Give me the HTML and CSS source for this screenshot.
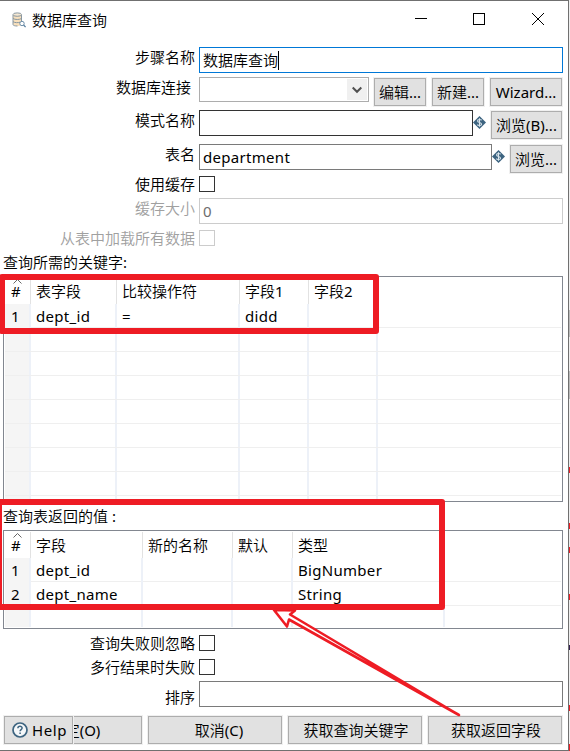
FILE: index.html
```html
<!DOCTYPE html>
<html lang="zh-CN">
<head>
  <meta charset="UTF-8" />
  <meta name="viewport" content="width=device-width, initial-scale=1.0" />
  <title>数据库查询</title>
  <link rel="stylesheet" href="styles.css">
</head>
<body>
  <div class="window">
    <div class="titlebar">
      <svg class="app-icon" width="15" height="17" viewBox="0 0 15 17">
        <path d="M1 3v9c0 1 2 2 4.500 2s4-.6 4-2V3z" fill="#f8e0bd" />
        <path d="M1 3v9.500c0 1 2 1.500 4.500 1.500M9.500 3v6M1 6.500c2 1.300 6.500 1.300 8.500 0M1 9.700c2 1.200 5 1.200 7 .5" fill="none" stroke="#8997a0" />
        <ellipse cx="5.250" cy="2.600" rx="4.250" ry="1.700" fill="#f4e7d2" stroke="#8997a0" />
        <circle cx="10" cy="11.500" r="2.200" fill="#fff" stroke="#6f90aa" />
        <path d="M11.600 13l2 2.200" stroke="#5a80a0" stroke-width="1.200" />
      </svg>
      <span class="title">数据库查询</span>
      <svg class="controls" width="130" height="14" viewBox="0 0 130 14" fill="none" stroke="#000">
        <path d="M0 6.500h12" />
        <rect x="58.500" y="1.500" width="11" height="11" />
        <path d="M117 1l12 12M129 1l-12 12" />
      </svg>
    </div>

    <div class="row row-step">
      <label>步骤名称</label>
      <div class="field focused">数据库查询<i class="caret"></i></div>
    </div>
    <div class="row row-conn">
      <label>数据库连接</label>
      <div class="combo">
        <span class="combo-arrow">
          <svg width="10" height="8" viewBox="0 0 10 8" fill="none" stroke="#505050" stroke-width="2"><path d="M.7 1.500L5 5.800 9.300 1.500" /></svg>
        </span>
      </div>
      <button class="btn w52 first">编辑...</button>
      <button class="btn w52">新建...</button>
      <button class="btn w72">Wizard...</button>
    </div>
    <div class="row row-schema">
      <label>模式名称</label>
      <div class="field dark"></div>
      <span class="var">
        <svg width="13" height="13" viewBox="0 0 12 12"><path d="M6 0l6 6-6 6-6-6z" fill="#3d6480" /><path d="M8 3.900C7.300 3 4.200 2.900 4.200 4.600S7.900 5.900 7.900 7.500 4.700 9 3.900 8M6 2v8" fill="none" stroke="#dce6ed" /></svg>
      </span>
      <button class="btn w71">浏览(B)...</button>
    </div>
    <div class="row row-table">
      <label>表名</label>
      <div class="field latin">department</div>
      <span class="var">
        <svg width="13" height="13" viewBox="0 0 12 12"><path d="M6 0l6 6-6 6-6-6z" fill="#3d6480" /><path d="M8 3.900C7.300 3 4.200 2.900 4.200 4.600S7.900 5.900 7.900 7.500 4.700 9 3.900 8M6 2v8" fill="none" stroke="#dce6ed" /></svg>
      </span>
      <button class="btn w52">浏览...</button>
    </div>
    <div class="row row-cache">
      <label>使用缓存</label>
      <span class="check"></span>
    </div>
    <div class="row row-size disabled">
      <label>缓存大小</label>
      <div class="field">0</div>
    </div>
    <div class="row row-all disabled">
      <label>从表中加载所有数据</label>
      <span class="check"></span>
    </div>

    <div class="section-title keys-title">查询所需的关键字:</div>
    <div class="grid keys">
      <div class="grid-row head"><span class="num">#</span><span>表字段</span><span>比较操作符</span><span>字段1</span><span>字段2</span><span></span></div>
      <div class="grid-row latin"><span class="num">1</span><span>dept_id</span><span>=</span><span>didd</span><span></span><span></span></div>
      <div class="grid-row"><span class="num"></span><span></span><span></span><span></span><span></span><span></span></div>
      <div class="grid-row"><span class="num"></span><span></span><span></span><span></span><span></span><span></span></div>
      <div class="grid-row"><span class="num"></span><span></span><span></span><span></span><span></span><span></span></div>
      <div class="grid-row"><span class="num"></span><span></span><span></span><span></span><span></span><span></span></div>
      <div class="grid-row"><span class="num"></span><span></span><span></span><span></span><span></span><span></span></div>
      <div class="grid-row"><span class="num"></span><span></span><span></span><span></span><span></span><span></span></div>
      <div class="grid-row"><span class="num"></span><span></span><span></span><span></span><span></span><span></span></div>
      <div class="grid-row last"><span class="num"></span><span></span><span></span><span></span><span></span><span></span></div>
    </div>

    <div class="section-title values-title">查询表返回的值 :</div>
    <div class="grid values">
      <div class="grid-row head"><span class="num">#</span><span>字段</span><span>新的名称</span><span>默认</span><span>类型</span><span></span></div>
      <div class="grid-row latin"><span class="num">1</span><span>dept_id</span><span></span><span></span><span>BigNumber</span><span></span></div>
      <div class="grid-row latin"><span class="num">2</span><span>dept_name</span><span></span><span></span><span>String</span><span></span></div>
      <div class="grid-row last"><span class="num"></span><span></span><span></span><span></span><span></span><span></span></div>
    </div>

    <div class="row row-fail">
      <label>查询失败则忽略</label>
      <span class="check"></span>
    </div>
    <div class="row row-multi">
      <label>多行结果时失败</label>
      <span class="check"></span>
    </div>
    <div class="row row-order">
      <label>排序</label>
      <div class="field"></div>
    </div>

    <div class="actions">
      <button class="btn ok">确定(O)</button>
      <button class="btn cancel">取消(C)</button>
      <button class="btn">获取查询关键字</button>
      <button class="btn">获取返回字段</button>
      <button class="btn help">
        <svg width="16" height="16" viewBox="0 0 16 16" fill="none" stroke="#3d6480"><circle cx="8" cy="8" r="7" stroke-width="1.700" fill="#f4f7f9" /><path d="M5.900 6.300c0-2.700 4.200-2.600 4.200-.2 0 1.500-2 1.500-2 3.200M8.100 10.500v1.600" stroke-width="1.500" /></svg>
        Help
      </button>
    </div>

    <!-- Red annotations -->
    <div class="mark mark-keys"></div>
    <div class="mark mark-values"></div>
    <svg class="arrow" width="200" height="120" viewBox="0 0 200 120">
      <path d="M9 5L22 21.500 24 14.500 194 110 25 9.500 30 5.500z" fill="#fff" stroke="#ee1c24" stroke-width="2.600" stroke-linejoin="round" />
    </svg>
  </div>
  <div class="backdrop"></div>
</body>
</html>
```

FILE: styles.css
```css
/* Global Styles */
* {
  box-sizing: border-box;
}
body {
  margin: 0;
  display: flex;
  width: 570px;
  height: 751px;
  overflow: hidden;
  background: #fff;
  color: #000;
  font-family: 'Noto Sans', 'Noto Sans CJK SC DemiLight', 'Noto Sans CJK SC', sans-serif;
  font-size: 15px;
  line-height: 20px;
}
/* Window */
.window {
  position: relative;
  width: 569px;
  height: 751px;
  overflow: hidden;
  border: solid #707070;
  border-width: 1px 1px 1px 0;
}
.backdrop {
  width: 1px;
  background: linear-gradient(#eee 310px, #bbb 310px, #bbb 337px, #eee 337px, #eee 371px, #bbb 371px, #bbb 399px, #eee 399px, #eee 467px, #ee1c24 467px, #ee1c24 473px, #eee 473px, #eee 523px, #ee1c24 523px, #ee1c24 529px, #eee 529px, #eee 547px, #ee1c24 547px, #ee1c24 553px, #eee 553px, #eee 594px, #ee1c24 594px, #ee1c24 600px, #eee 600px, #eee 645px, #312050 645px, #312050 650px, #eee 650px, #eee 705px, #ee1c24 705px, #ee1c24 711px, #eee 711px, #eee 744px, #ee1c24 744px);
}
/* Title Bar */
.titlebar {
  display: flex;
  align-items: center;
  height: 46px;
  padding: 0 23px 8px 12px;
}
.app-icon {
  margin-right: 5px;
}
.title {
  flex: 1;
}
.controls {
  position: relative;
  top: -1px;
}
/* Form Rows */
.row {
  display: flex;
  align-items: flex-start;
  padding-right: 5px;
}
.row label {
  width: 195px;
  margin-right: 4px;
  text-align: right;
  white-space: nowrap;
}
.field {
  flex: 1;
  height: 26px;
  padding: 2px 3px;
  border: 1px solid #7a7a7a;
  white-space: nowrap;
}
.field.focused {
  border-color: #0078d7;
}
.field.dark {
  border-color: #333;
}
.latin {
  letter-spacing: 0.3px;
}
.caret {
  display: inline-block;
  width: 1px;
  height: 19px;
  background: #000;
  vertical-align: -4px;
}
.check {
  width: 16px;
  height: 16px;
  border: 1px solid #333;
}
.row-step {
  height: 30px;
}
.row-conn {
  height: 33px;
}
.row-schema {
  height: 34px;
}
.row-table {
  height: 32px;
}
.row-cache {
  height: 22px;
}
.row-size {
  height: 32px;
}
.row-all {
  height: 22px;
}
.row-conn label {
  padding-right: 4px;
}
.row-cache label,
.row-all label,
.row-fail label,
.row-multi label {
  margin-top: -2px;
}
.row-order label {
  margin-top: 6px;
}
.disabled label {
  color: #a0a0a0;
}
.disabled .field {
  border-color: #ccc;
  color: #6d6d6d;
}
.disabled .check {
  border-color: #ccc;
}
.combo {
  display: flex;
  justify-content: flex-end;
  width: 170px;
  height: 25px;
  padding: 1px;
  border: 1px solid #adadad;
}
.combo-arrow {
  display: flex;
  align-items: center;
  justify-content: center;
  width: 20px;
  background: #f0f0f0;
}
.var {
  display: flex;
  width: 18px;
  padding-top: 6px;
}
/* Buttons */
.btn {
  height: 28px;
  padding: 0;
  border: 1px solid #adadad;
  background: #e1e1e1;
  box-shadow: 0 0 0 1px #f0f0f0;
  color: #000;
  font: inherit;
  white-space: nowrap;
}
.row .btn {
  margin: 1px 0 0 6px;
}
.row .btn.first {
  margin-left: 5px;
}
.row .var + .btn {
  margin-left: 0;
}
.row-conn,
.row-schema,
.row-table {
  padding-right: 6px;
}
.w52 {
  width: 52px;
}
.w71 {
  width: 71px;
}
.w72 {
  width: 72px;
}
/* Tables */
.section-title {
  height: 24px;
  padding-left: 3px;
}
.grid {
  width: 560px;
  margin-left: 3px;
  padding: 1px;
  border: 1px solid #828790;
}
.keys {
  height: 226px;
}
.values {
  height: 99px;
}
.grid-row {
  display: grid;
  height: 24px;
  border-bottom: 1px solid #efefef;
  line-height: 24px;
}
.keys .grid-row {
  grid-template-columns: 26px 86px 123px 69px 69px 1fr;
}
.values .grid-row {
  grid-template-columns: 26px 112px 90px 60px 152px 1fr;
}
.grid-row span {
  padding-left: 5px;
  border-right: 2px solid #edf1f8;
  white-space: nowrap;
}
.grid-row span:last-child {
  border-right: none;
}
.grid-row .num {
  padding-left: 6px;
  background: #f5f5f5;
}
.grid-row.head {
  height: 26px;
  border-bottom: none;
  line-height: 26px;
}
.grid-row.head span {
  border-right: 1px solid #e2e2e2;
}
.grid-row.head span:last-child {
  border-right: none;
}
.grid-row.head .num {
  background: #fff url("data:image/svg+xml,%3Csvg xmlns='http://www.w3.org/2000/svg' width='9' height='5'%3E%3Cpath d='M.5 4.500l4-4 4 4' fill='none' stroke='%23666'/%3E%3C/svg%3E") no-repeat 8px 1px;
}
.grid-row.last {
  border-bottom: none;
}
.keys .last {
  height: 4px;
}
.values .last {
  height: 21px;
}
.values-title {
  margin-top: 4px;
}
.row-fail {
  height: 24px;
  margin-top: 6px;
}
.row-multi {
  height: 22px;
}
/* Bottom Buttons */
.actions {
  position: relative;
  display: flex;
  gap: 6px;
  margin-top: 9px;
  padding-left: 4px;
}
.actions .btn {
  width: 134px;
  padding-left: 2px;
}
.actions .ok {
  width: 138px;
  padding-left: 4px;
}
.actions .cancel {
  padding-left: 8px;
}
.actions .help {
  position: absolute;
  left: 4px;
  display: flex;
  align-items: center;
  gap: 4px;
  width: 69px;
  padding-left: 7px;
  letter-spacing: 0.6px;
}
/* Annotations */
.mark {
  position: absolute;
  border: 6px solid #ee1c24;
  border-radius: 3px;
}
.mark-keys {
  left: -1px;
  top: 273px;
  width: 380px;
  height: 60px;
}
.mark-values {
  left: -4px;
  top: 498px;
  width: 449px;
  height: 111px;
}
.arrow {
  position: absolute;
  left: 265px;
  top: 604px;
}
```
